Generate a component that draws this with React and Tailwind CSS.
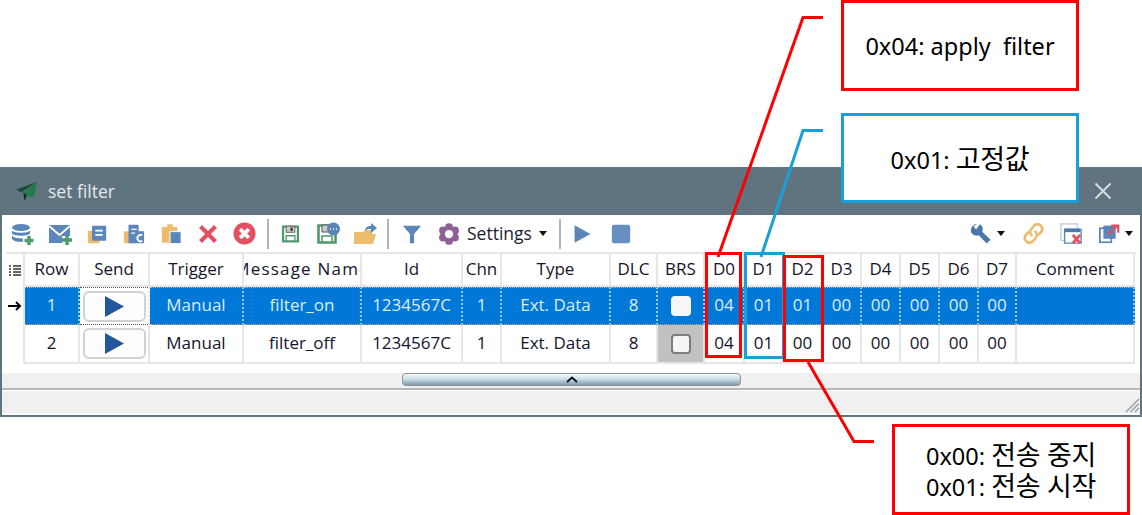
const UI = '"Open Sans","Noto Sans CJK KR",sans-serif';
const KR = '"Noto Sans","Noto Sans CJK KR",sans-serif';

const cols = ["Row","Send","Trigger","Message Name","Id","Chn","Type","DLC","BRS","D0","D1","D2","D3","D4","D5","D6","D7","Comment"];
const rows = [
  ["1","","Manual","filter_on","1234567C","1","Ext. Data","8","","04","01","01","00","00","00","00","00",""],
  ["2","","Manual","filter_off","1234567C","1","Ext. Data","8","","04","01","00","00","00","00","00","00",""],
];

const B = "#5b86b9", G = "#4f9a6d", O = "#ecbd6f", R = "#e4505f", P = "#8f6096";
const Svg = ({ children, w = 24, h = 24 }) => (
  <svg width={w} height={h} viewBox="0 0 24 24" fill="none">{children}</svg>
);

const icons = {
  db: <Svg><ellipse cx="10" cy="5.500" rx="9" ry="3.500" fill={B}/><path d="M1 8.500c2 3 16 3 18 0v3c-2 3-16 3-18 0zM1 13.500c2 3 10 3 11 3v3c-4 1-10 0-11-3z" fill={B}/><path d="M18 14v9M13.500 18.500h9" stroke={G} strokeWidth="3.500"/></Svg>,
  mail: <Svg><path d="M1 3h21v11h-8v7H1z" fill={B}/><path d="M1 4l10.500 9L22 4" stroke="#fff" strokeWidth="1.800"/><path d="M19 13v10M14 18h10" stroke={G} strokeWidth="3.500"/></Svg>,
  doc: <Svg w={20} h={22}><rect x="1" y="8" width="14" height="15" rx="1" fill={O}/><rect x="6" y="2" width="17" height="18" rx="1" fill={B}/><path d="M10 8h9M10 13h9" stroke="#fff" strokeWidth="2.200"/></Svg>,
  docc: <Svg w={22} h={22}><rect x="1" y="9" width="13" height="13" rx="1" fill={O}/><path d="M6 2h11v7h6v13H6z" fill={B}/><path d="M9 7h6M9 11h4" stroke="#fff" strokeWidth="1.500"/><path d="M21 13.500a3.500 3.500 0 1 0 0 6" stroke="#fff" strokeWidth="2"/></Svg>,
  paste: <Svg w={22} h={23}><path d="M2 5h6V2h6v3h5v17H2z" fill={O}/><rect x="11" y="10" width="12" height="13" fill={B} stroke="#fff"/></Svg>,
  x: <Svg w={20} h={20}><path d="M3 3l18 18M21 3L3 21" stroke={R} strokeWidth="5"/></Svg>,
  cx: <Svg w={23} h={23}><circle cx="12" cy="12" r="11.500" fill={R}/><path d="M7.500 7.500l9 9M16.500 7.500l-9 9" stroke="#fff" strokeWidth="4"/></Svg>,
  save: <Svg w={21} h={22}><path d="M3.500 3.500h17v17h-17z" stroke={G} strokeWidth="2.600"/><rect x="7" y="3" width="10" height="7" fill="#ccc" stroke="#555" strokeWidth="1"/><rect x="12" y="4.500" width="2.500" height="4" fill="#333"/><path d="M7 20v-6h10v6" stroke={G} strokeWidth="1.500"/></Svg>,
  savec: <Svg><path d="M2.500 3.500h17v17h-17z" stroke={G} strokeWidth="2.600"/><rect x="6" y="3" width="8" height="7" fill="#ccc" stroke="#555"/><path d="M6 20v-6h10v6" stroke={G} strokeWidth="1.500"/><circle cx="17.500" cy="7" r="6.500" fill={B}/><path d="M14 7h1M17 7h1M20 7h1" stroke="#fff" strokeWidth="1.600"/></Svg>,
  open: <Svg><path d="M1 10h9l2-2h7v4H1zM1 12h22l-3 10H1z" fill={O}/><path d="M12 9c0-4 3-5 6-5V1l6 5-6 5V7c-3 0-4 0-6 2z" fill={B}/></Svg>,
  filter: <Svg w={20} h={22}><path d="M1 2h22l-8.500 10v11h-5V12z" fill={B}/></Svg>,
  gear: <Svg w={22} h={22}><g fill={P}><circle cx="12" cy="4.500" r="4.300"/><circle cx="12" cy="19.500" r="4.300"/><circle cx="5.500" cy="8.200" r="4.300"/><circle cx="18.500" cy="8.200" r="4.300"/><circle cx="5.500" cy="15.800" r="4.300"/><circle cx="18.500" cy="15.800" r="4.300"/><circle cx="12" cy="12" r="8"/></g><circle cx="12" cy="12" r="4.500" fill="#fff"/></Svg>,
  play: <Svg w={20} h={22}><path d="M2 1l20 11L2 23z" fill={B}/></Svg>,
  stop: <Svg w={20} h={20}><rect x="1" y="1" width="22" height="22" rx="2.500" fill="#688fbf"/></Svg>,
  wrench: <Svg w={21} h={21}><path d="M8 1a7.500 7.500 0 0 0-7 7.500c0 1 .2 2 .6 3A7.500 7.500 0 0 0 10 14l9 9.500 4.500-4.500-9.500-9a7.500 7.500 0 0 0-2.500-8.500L7 7 4 4z" fill="#4a78ad"/></Svg>,
  link: <Svg w={23} h={23}><path d="M10 14a5 5 0 0 1 0-7l3-3.500a5 5 0 0 1 7 7l-2.500 2.500" stroke={O} strokeWidth="2.800" strokeLinecap="round"/><path d="M14 10a5 5 0 0 1 0 7l-3 3.500a5 5 0 0 1-7-7l2.500-2.500" stroke={O} strokeWidth="2.800" strokeLinecap="round"/></Svg>,
  winx: <Svg w={22} h={22}><rect x="1" y="1" width="18" height="18" stroke="#b9cde2" strokeWidth="1.500"/><path d="M5 7h18v15H5z" fill="#fff" stroke="#5b86b9" strokeWidth="1.500"/><path d="M5 6h17v4H5z" fill="#4f79ab"/><path d="M14 13l8 9M22 13l-8 9" stroke={R} strokeWidth="3"/></Svg>,
  exp: <Svg w={21} h={21}><rect x="1" y="6" width="13" height="16" fill="#fff" stroke={B} strokeWidth="2"/><rect x="5" y="3" width="14" height="15" fill={B}/><path d="M11 13l9-9M14 3h8v8" stroke={R} strokeWidth="2.500"/></Svg>,
};

const Btn = ({ name, w = "w-[37px]" }) => (
  <div className={`${w} h-full flex items-center justify-center shrink-0`}>{icons[name]}</div>
);
const Sep = ({ w }) => (
  <div className={`${w} h-full flex items-center justify-center shrink-0`}>
    <div className="w-[2px] h-[30px] bg-[#b4b4b4]" />
  </div>
);
const Caret = () => (
  <svg width="8" height="5" viewBox="0 0 8 5" className="shrink-0"><path d="M0 0h8L4 5z" fill="#111" /></svg>
);

const Cell = ({ col, row, value }) => {
  const sel = row === 0;
  const base = "flex items-center justify-center overflow-hidden whitespace-nowrap border-r-2 border-[#e6e6e6] text-[17px]";
  if (col === 1) {
    return (
      <div className={`${base} bg-white ${sel ? "border-y border-dotted border-y-[#555]" : "border-b-2"}`}>
        <div className="w-[63px] h-[31px] flex items-center justify-center rounded-[6px] border-2 border-[#d2d2d2] bg-[#fdfdfd]">
          <svg width="20" height="21" viewBox="0 0 20 21"><path d="M1 0l19 10.500L1 21z" fill="#22579b" /></svg>
        </div>
      </div>
    );
  }
  if (col === 8) {
    return (
      <div className={`${base} ${sel ? "bg-[#0078d7] border-y border-dotted border-y-[#d8a878] border-r-[#9cc8ec]" : "bg-[#c1c1c1] border-b-2"}`}>
        <div className={`w-[20px] h-[20px] rounded-[4px] bg-[#f6f6f6] ${sel ? "" : "border-2 border-[#7c7c7c]"}`} />
      </div>
    );
  }
  return (
    <div className={`${base} pb-[2px] ${sel ? "bg-[#0078d7] text-[#dcedfb] border-y border-dotted border-y-[#d8a878] border-r-[#9cc8ec]" : "bg-white text-[#14142b] border-b-2"}`}>
      {value}
    </div>
  );
};

const Ko = ({ children }) => <span className="text-[27px] leading-[29px] tracking-[-0.3px]">{children}</span>;

const Callout = ({ className, children }) => (
  <div className={`absolute flex flex-col items-center justify-center bg-white border-[3px] pt-[2px] text-[23.500px] leading-[29px] text-black ${className}`} style={{ fontFamily: KR }}>
    {children}
  </div>
);

const Box = ({ className }) => <div className={`absolute border-[3px] ${className}`} />;

export default function App() {
  return (
    <div className="relative w-[1142px] h-[515px] bg-white overflow-hidden" style={{ fontFamily: UI }}>
      <div className="pt-[167px]">
        <div className="w-[1142px] h-[250px] flex flex-col bg-[#607480] px-[2px] pb-[2px]">
          {/* title */}
          <div className="h-[48px] shrink-0 flex items-center pl-[14px] pr-[28px]">
            <svg width="21" height="19" viewBox="0 0 20 18" className="shrink-0">
              <path d="M20 0L0 7l5 3z" fill="#1d4d3a" /><path d="M20 0L7 10l1 8 4-5 5 2z" fill="#237a4d" /><path d="M7 10l1 8 2-6z" fill="#222" />
            </svg>
            <span className="ml-[11px] text-[17.500px] text-[#e4e9ec]">set filter</span>
            <svg width="18" height="18" viewBox="0 0 18 18" className="ml-auto"><path d="M1.500 1.500l15 15M16.500 1.500l-15 15" stroke="#d9dfe3" strokeWidth="1.800" /></svg>
          </div>

          {/* toolbar */}
          <div className="h-[37px] shrink-0 flex items-center bg-white pl-[2px]">
            <Btn name="db" /><Btn name="mail" /><Btn name="doc" /><Btn name="docc" /><Btn name="paste" /><Btn name="x" /><Btn name="cx" />
            <Sep w="w-[9px]" />
            <Btn name="save" /><Btn name="savec" /><Btn name="open" />
            <Sep w="w-[10px]" />
            <Btn name="filter" /><Btn name="gear" />
            <span className="text-[17.500px] text-[#1d1d33] w-[69px] whitespace-nowrap">Settings</span>
            <div className="ml-[3px]"><Caret /></div>
            <Sep w="w-[26px]" />
            <Btn name="play" w="w-[19px]" />
            <Btn name="stop" w="w-[57px]" />
            <div className="ml-auto flex items-center h-full pr-[7px]">
              <Btn name="wrench" w="w-[28px]" />
              <div className="ml-[3px] mr-[13px]"><Caret /></div>
              <Btn name="link" w="w-[30px]" />
              <Btn name="winx" w="w-[45px]" />
              <Btn name="exp" w="w-[32px]" />
              <Caret />
            </div>
          </div>

          {/* grid */}
          <div className="shrink-0 bg-white px-[4px] pb-[9px]">
            <div className="grid grid-cols-[19px_55px_70px_94px_118px_101px_39px_109px_47px_47px_40px_39px_39px_39px_39px_39px_39px_38px_118px] grid-rows-[33px_38px_39px] border-t-2 border-[#e6e6e6]">
              <div className="flex items-center justify-center bg-white border-r-2 border-[#e6e6e6]">
                <svg width="12" height="12" viewBox="0 0 12 12"><path d="M0 1h2M0 4h2M0 7h2M0 10h2M4 1h8M4 4h8M4 7h8M4 10h8" stroke="#333" strokeWidth="1.500" /></svg>
              </div>
              {cols.map((c) => (
                <div key={c} className={`flex items-center justify-center overflow-hidden whitespace-nowrap bg-white border-r-2 border-b-2 border-[#e6e6e6] pb-[2px] text-[17px] text-[#14142b] ${c === "Message Name" ? "tracking-[1.200px]" : ""}`}>
                  <span className="shrink-0">{c}</span>
                </div>
              ))}
              {rows.map((r, ri) => (
                <div key={ri} className="contents">
                  <div className="flex items-center justify-center bg-white border-r-2 border-[#e6e6e6]">
                    {ri === 0 && (
                      <svg width="14" height="10" viewBox="0 0 14 10"><path d="M0 5h11M8 1l4 4-4 4" stroke="#000" strokeWidth="2" fill="none" /></svg>
                    )}
                  </div>
                  {r.map((v, ci) => <Cell key={ci} col={ci} row={ri} value={v} />)}
                </div>
              ))}
            </div>
          </div>

          {/* splitter */}
          <div className="h-[15px] shrink-0 bg-[#f0f0f0] pl-[400px]">
            <div className="w-[339px] h-[13px] rounded-[4px] border border-[#8c9399] bg-gradient-to-b from-[#f4f8fb] via-[#c6d9e6] to-[#7f9aab] flex items-center justify-center">
              <svg width="12" height="7" viewBox="0 0 12 7"><path d="M1 6l5-4.500L11 6" stroke="#111" strokeWidth="2" fill="none" /></svg>
            </div>
          </div>

          {/* status */}
          <div className="flex-1 flex items-end justify-end bg-[#f0f0f0] border-t-2 border-[#b7b7b7] shadow-[inset_0_1px_0_#fff] border-b-2 border-b-white">
            <svg width="16" height="16" viewBox="0 0 16 16"><path d="M15 2L2 15M15 6.500L6.500 15M15 11l-4 4" stroke="#9aa0a4" strokeWidth="1.500" /></svg>
          </div>
        </div>
      </div>

      {/* annotation overlay */}
      <svg width="1142" height="515" className="absolute left-0 top-0 pointer-events-none" fill="none" strokeWidth="3">
        <path d="M823 17.500H803L718 257" stroke="#ff0000" />
        <path d="M823 130.500H803L761 257" stroke="#1aa0d8" />
        <path d="M808 362L854 441.500H874" stroke="#ff0000" />
      </svg>
      <Box className="left-[705px] top-[252px] w-[37px] h-[106px] border-[#ff0000]" />
      <Box className="left-[744px] top-[252px] w-[41px] h-[107px] border-[#1aa0d8]" />
      <Box className="left-[783px] top-[255px] w-[41px] h-[107px] border-[#ff0000]" />

      <Callout className="left-[841px] top-0 w-[238px] h-[91px] border-[#ff0000]">
        <span className="whitespace-pre">0x04: apply  filter</span>
      </Callout>
      <Callout className="left-[841px] top-[113px] w-[238px] h-[90px] border-[#1aa0d8]">
        <span>0x01: <Ko>고정값</Ko></span>
      </Callout>
      <Callout className="left-[892px] top-[424px] w-[238px] h-[91px] border-[#ff0000]">
        <span className="leading-[29px]">0x00: <Ko>전송 중지</Ko></span>
        <span className="leading-[29px]">0x01: <Ko>전송 시작</Ko></span>
      </Callout>
    </div>
  );
}
